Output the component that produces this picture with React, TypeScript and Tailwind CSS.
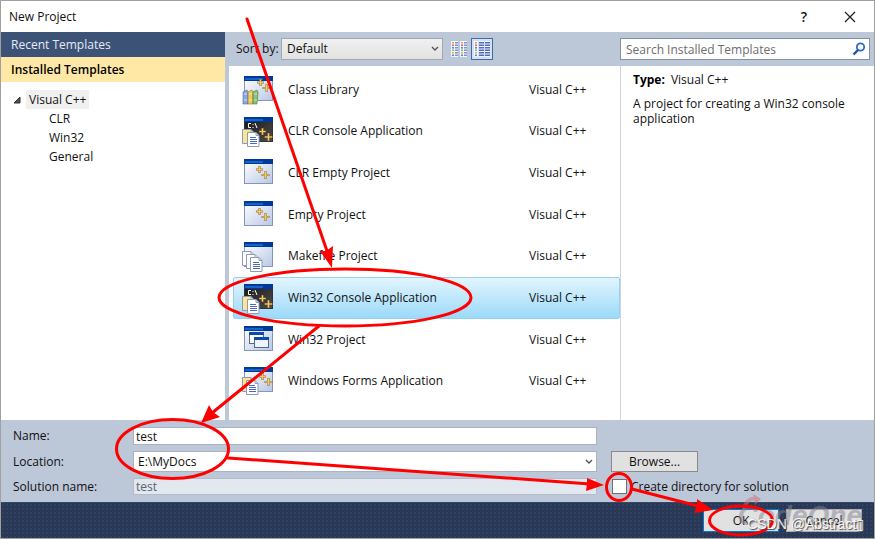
import React, { useState } from "react";
import clsx from "clsx";

type IconKind = "library" | "console" | "empty" | "makefile" | "windows" | "forms";

const templates: { name: string; icon: IconKind }[] = [
    { name: "Class Library", icon: "library" },
    { name: "CLR Console Application", icon: "console" },
    { name: "CLR Empty Project", icon: "empty" },
    { name: "Empty Project", icon: "empty" },
    { name: "Makefile Project", icon: "makefile" },
    { name: "Win32 Console Application", icon: "console" },
    { name: "Win32 Project", icon: "windows" },
    { name: "Windows Forms Application", icon: "forms" },
];

const treeItems = ["CLR", "Win32", "General"];

// Small gold "++" mark, placed by its top-left corner
function Pluses({ x, y }: { x: number; y: number }) {
    return (
        <g transform={`translate(${x} ${y})`} fill="none">
            <path d="M3.5 0v7M0 3.500h7M9.500 5v8M5.500 9h8" stroke="#9a742f" strokeWidth="2.2" />
            <path d="M3.5 0.500v6M0.500 3.500h6M9.500 5.500v7M6 9h7" stroke="#f6ca6a" strokeWidth="1.2" />
        </g>
    );
}

function Sheet({ x, y, fill = "#ffffff", lines = false }: { x: number; y: number; fill?: string; lines?: boolean }) {
    return (
        <g transform={`translate(${x} ${y})`}>
            <path d="M0.5 0.5h8.5l3 3v11h-11.5z" fill={fill} stroke="#8d9bb8" />
            <path d="M9 0.5v3h3" fill="none" stroke="#8d9bb8" />
            {lines && <path d="M3 5.5h6M3 7.5h7M3 9.5h7M3 11.5h7" stroke="#4a69b8" />}
        </g>
    );
}

function TemplateIcon({ kind }: { kind: IconKind }) {
    const dark = kind === "console";
    return (
        <svg viewBox="0 0 32 32" className="h-8 w-8 shrink-0" aria-hidden="true">
            <defs>
                <linearGradient id={`pane-${kind}`} x1="0" y1="0" x2="1" y2="1">
                    <stop offset="0" stopColor={dark ? "#161616" : "#ffffff"} />
                    <stop offset="1" stopColor={dark ? "#4c4c4c" : "#b9c8e6"} />
                </linearGradient>
            </defs>
            <rect x="2.5" y="2.5" width="28" height="24" fill={`url(#pane-${kind})`} stroke={dark ? "#333333" : "#8596b8"} />
            <path d="M2 2h29v5H2z" fill="#003a96" />
            <path d="M3 4h18v2H3z" fill="#1464cc" />
            {kind === "library" && (
                <>
                    <Pluses x={15} y={5} />
                    <path d="M1 18l4-2 1 2v12H1z" fill="#8fa9e0" stroke="#4a68a8" strokeWidth="0.6" />
                    <path d="M6 18l4-2 1 2v12H6z" fill="#edc95c" stroke="#94731c" strokeWidth="0.6" />
                    <path d="M11 18l4-2 1 2-1 12h-4z" fill="#8cc07c" stroke="#447a38" strokeWidth="0.6" />
                    <path d="M2 20h3M2 26h3M7 20h3M7 26h3M12 20h3M12 26h3" stroke="#ffffff" strokeOpacity="0.6" />
                </>
            )}
            {kind === "console" && (
                <>
                    <path d="M9 8.5H6.500v4H9M11 9v1M11 12v1M13 8l2 5" fill="none" stroke="#ffffff" />
                    <Pluses x={17} y={13} />
                    <Sheet x={0} y={14} fill="#fbe496" />
                    <Sheet x={5} y={17} lines />
                </>
            )}
            {kind === "empty" && <Pluses x={14} y={9} />}
            {kind === "makefile" && (
                <>
                    <Sheet x={0} y={11} />
                    <Sheet x={4} y={14} />
                    <Sheet x={8} y={17} lines />
                </>
            )}
            {kind === "windows" && (
                <>
                    <rect x="7.5" y="8.500" width="14" height="11" fill="#ffffff" stroke="#52688f" />
                    <path d="M7 8h15v3H7z" fill="#0b4bab" />
                    <rect x="12.500" y="13.500" width="14" height="10" fill="#eef3fc" stroke="#52688f" />
                    <path d="M12 13h15v3H12z" fill="#0b4bab" />
                </>
            )}
            {kind === "forms" && (
                <>
                    <Pluses x={17} y={8} />
                    <Sheet x={0} y={12} fill="#fbe496" />
                    <Sheet x={4} y={15} lines />
                </>
            )}
        </svg>
    );
}

function ViewIcon({ columns }: { columns: boolean }) {
    const colors = ["#efa25a", "#f0604c", "#5b86e0", "#7fc27a", "#efb04c", "#5b86e0"];
    return (
        <svg viewBox="0 0 16 16" className="h-4 w-4" aria-hidden="true">
            <path d={columns ? "M0 0h7v16H0zM9 0h7v16H9z" : "M0 0h4v16H0zM5 0h5v16H5zM11 0h5v16h-5z"} fill="#f4f8ff" />
            {colors.map((color, i) => {
                const y = 1 + i * 2.5;
                return (
                    <g key={i}>
                        <rect x="1" y={y} width="2" height="1.6" fill={color} />
                        {columns ? (
                            <>
                                <path d={`M4 ${y}h3v1.500h-3zM13 ${y}h3v1.500h-3z`} fill="#8190d0" />
                                <rect x="10" y={y} width="2" height="1.6" fill={color} />
                            </>
                        ) : (
                            <path d={`M5 ${y}h5v1.500h-5zM11 ${y}h5v1.500h-5z`} fill="#5468b8" />
                        )}
                    </g>
                );
            })}
        </svg>
    );
}

function Chevron() {
    return (
        <svg viewBox="0 0 8 6" className="pointer-events-none absolute right-1 top-1/2 h-[6px] w-2 -translate-y-1/2" aria-hidden="true">
            <path d="M1 1l3 3 3-3" fill="none" stroke="#555555" strokeWidth="1.4" />
        </svg>
    );
}

// Red pen marks that walk through the dialog step by step
function Annotations() {
    return (
        <svg viewBox="0 0 875 539" className="pointer-events-none absolute -left-px -top-px h-[539px] w-[875px]" aria-hidden="true">
            <g fill="none" stroke="#ff0000" strokeWidth="3">
                <path d="M247 19L327 251M319 326L212 413M228 458L590 484M632 489L698 506" strokeLinecap="round" />
                <ellipse cx="345" cy="297.500" rx="126" ry="28.500" />
                <ellipse cx="172.500" cy="449" rx="56" ry="29.500" />
                <ellipse cx="619" cy="487" rx="12.500" ry="13.500" />
                <ellipse cx="741" cy="520.500" rx="31.500" ry="14.500" />
            </g>
            <g fill="#ff0000">
                <path d="M332 268L320 251L326 251L333 246z" />
                <path d="M201 423L209 405L213 412L220 417z" />
                <path d="M604 485L586 491L587 484L587 478z" />
                <path d="M713 510L694 513L697 506L697 499z" />
            </g>
        </svg>
    );
}

export default function App() {
    const [selected, setSelected] = useState(5);

    return (
        <div className="relative flex min-h-screen flex-col overflow-hidden border border-[#a0a0a0] bg-[#bcc7d8] font-['Open_Sans','Noto_Sans',sans-serif] text-xs text-[#111111]">
            {/* Title bar */}
            <header className="flex h-[31px] shrink-0 items-center justify-between bg-white pl-2 pr-[18px]">
                <h1>New Project</h1>
                <div className="flex items-center gap-8">
                    <button type="button" aria-label="Help" className="w-4 text-sm font-semibold">?</button>
                    <button type="button" aria-label="Close">
                        <svg viewBox="0 0 12 12" className="h-3 w-3" aria-hidden="true">
                            <path d="M1 1l10 10M11 1L1 11" stroke="#222222" strokeWidth="1.3" />
                        </svg>
                    </button>
                </div>
            </header>

            <div className="flex grow">
                {/* Template tree */}
                <nav className="w-[224px] shrink-0 bg-white">
                    <h2 className="h-[25px] bg-[#3d5277] px-[10px] leading-[25px] text-[#e6ebf5]">Recent Templates</h2>
                    <h2 className="h-[25px] bg-[#ffe8a6] px-[10px] font-semibold leading-[25px] text-black">Installed Templates</h2>
                    <ul className="pt-2 leading-[19px]">
                        <li>
                            <div className="flex items-center gap-[5px] pl-3">
                                <svg viewBox="0 0 8 8" className="h-2 w-2" aria-hidden="true">
                                    <path d="M7 1v6H1z" fill="#505050" stroke="#333333" />
                                </svg>
                                <span className="bg-[#f0f0f0] px-[3px]">Visual C++</span>
                            </div>
                            <ul className="pl-12">
                                {treeItems.map((item) => (
                                    <li key={item}>{item}</li>
                                ))}
                            </ul>
                        </li>
                    </ul>
                </nav>

                <div className="flex min-w-0 grow flex-col pl-1">
                    {/* Toolbar */}
                    <div className="flex h-[34px] items-center pl-[7px] pr-1">
                        <label htmlFor="sort" className="w-[45px] whitespace-nowrap">Sort by:</label>
                        <div className="relative w-[162px]">
                            <select id="sort" className="block h-[22px] w-full appearance-none border border-[#a0a8b4] bg-linear-to-b from-[#f0f0f0] to-[#e2e2e2] px-[5px]">
                                <option>Default</option>
                            </select>
                            <Chevron />
                        </div>
                        <button type="button" aria-label="Small icons" className="ml-2">
                            <ViewIcon columns />
                        </button>
                        <button type="button" aria-label="Medium icons" className="ml-1 border border-[#4a689c] bg-[#cfe3f6] p-[2px]">
                            <ViewIcon columns={false} />
                        </button>
                        <div className="relative ml-auto w-[250px]">
                            <input
                                type="search"
                                aria-label="Search Installed Templates"
                                placeholder="Search Installed Templates"
                                className="block h-[22px] w-full border border-[#8591a8] bg-white px-[5px] placeholder:text-[#6d6d6d]"
                            />
                            <svg viewBox="0 0 14 14" className="absolute right-1 top-1 h-[14px] w-[14px]" aria-hidden="true">
                                <circle cx="8.500" cy="5" r="3.700" fill="none" stroke="#2d6cc8" strokeWidth="1.800" />
                                <path d="M6 8l-4.500 4.500" stroke="#2450a4" strokeWidth="2.400" />
                            </svg>
                        </div>
                    </div>

                    <div className="flex grow bg-white">
                        {/* Template list */}
                        <ul className="grid grow grid-rows-8 pb-[18px] pl-1 pt-[3px]">
                            {templates.map((template, index) => (
                                <li key={template.name}>
                                    <button
                                        type="button"
                                        onClick={() => setSelected(index)}
                                        className={clsx(
                                            "flex h-full w-full items-center rounded-xs border pl-2 text-left",
                                            index === selected
                                                ? "border-[#98d1ef] bg-linear-to-b from-[#e2f5fe] via-[#bfe7fb] to-[#9bdafa]"
                                                : "border-transparent"
                                        )}
                                    >
                                        <TemplateIcon kind={template.icon} />
                                        <span className="grow pl-[14px]">{template.name}</span>
                                        <span className="w-[90px]">Visual C++</span>
                                    </button>
                                </li>
                            ))}
                        </ul>

                        {/* Description */}
                        <aside className="w-[254px] shrink-0 border-l border-[#ccd5e4] px-3 pt-[6px]">
                            <p className="leading-4">
                                <b className="mr-[6px] text-black">Type:</b>Visual C++
                            </p>
                            <p className="mt-2 leading-[15px]">A project for creating a Win32 console application</p>
                        </aside>
                    </div>
                </div>
            </div>

            {/* Project settings */}
            <form className="grid shrink-0 grid-cols-[120px_464px_1fr] items-center gap-y-[6px] py-[7px] pl-3">
                <label htmlFor="name">Name:</label>
                <input id="name" defaultValue="test" className="h-[18px] border border-[#a9b3c4] bg-white px-[2px]" />
                <span />

                <label htmlFor="location">Location:</label>
                <div className="relative">
                    <select id="location" className="block h-[21px] w-full appearance-none border border-[#a9b3c4] bg-white px-1">
                        <option>E:\MyDocs</option>
                    </select>
                    <Chevron />
                </div>
                <button type="button" className="ml-[14px] h-[21px] w-[87px] border border-[#8a8a8a] bg-[#e1e1e1]">Browse...</button>

                <label htmlFor="solution">Solution name:</label>
                <input id="solution" defaultValue="test" disabled className="h-[17px] border border-[#b3bccb] bg-[#e2e7f0] px-[2px] text-[#5c626e]" />
                <label className="ml-[15px] flex h-[17px] items-center gap-1">
                    <input type="checkbox" className="h-[15px] w-[15px] appearance-none border border-[#707070] bg-white" />
                    Create directory for solution
                </label>
            </form>

            <footer className="flex h-9 shrink-0 items-center justify-end gap-[7px] border-t border-[#35496a] bg-[#293955] bg-[radial-gradient(#2f4164_1px,transparent_1px)] bg-[size:4px_4px] pr-3">
                <button type="button" className="h-[23px] w-[76px] border border-[#0078d7] bg-[#e1e1e1]">OK</button>
                <button type="button" className="h-[23px] w-[76px] border border-[#adadad] bg-[#e1e1e1]">Cancel</button>
            </footer>

            {/* Site watermark */}
            <div className="pointer-events-none absolute bottom-1 right-3 opacity-50">
                <svg viewBox="0 0 20 18" className="absolute -top-1 left-1 h-[18px] w-5" aria-hidden="true">
                    <path d="M2 16C3 8 8 4 13 5" fill="none" stroke="#c9777f" strokeWidth="4" />
                    <path d="M11 0l8 5-6 6z" fill="#d9666c" />
                </svg>
                <span className="block font-['Liberation_Sans',sans-serif] text-[28px] font-bold italic leading-9 text-[#85838f]">CodeOne</span>
            </div>

            <Annotations />

            <span className="pointer-events-none absolute bottom-[6px] right-[10px] font-['Liberation_Sans','DejaVu_Sans',sans-serif] text-sm leading-4 text-white/90 [text-shadow:1px_1px_1px_#444444]">CSDN @Abstract▯</span>
        </div>
    );
}
